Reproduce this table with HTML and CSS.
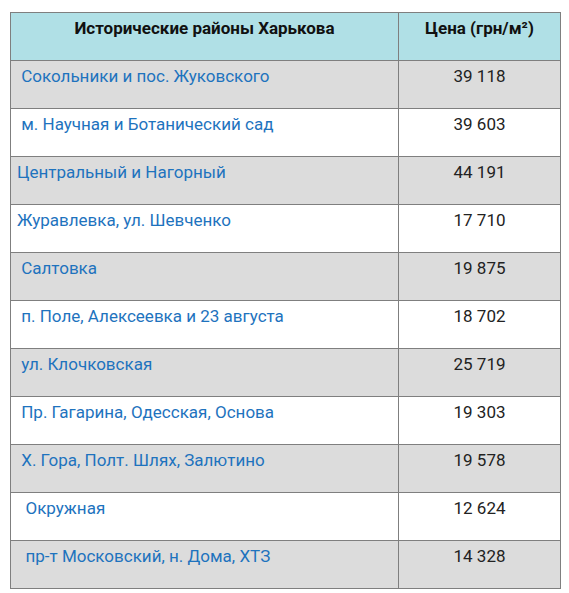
FILE: index.html
```html
<!DOCTYPE html>
<html lang="ru">
<head>
<meta charset="utf-8">
<link rel="stylesheet" href="styles.css">
</head>
<body>
<table class="prices">
  <thead>
    <tr>
      <th class="district">Исторические районы Харькова</th>
      <th class="price">Цена (грн/м²)</th>
    </tr>
  </thead>
  <tbody>
    <tr class="odd"><td class="district">&nbsp;Сокольники и пос. Жуковского</td><td class="price">39 118</td></tr>
    <tr><td class="district">&nbsp;м. Научная и Ботанический сад</td><td class="price">39 603</td></tr>
    <tr class="odd"><td class="district">Центральный и Нагорный</td><td class="price">44 191</td></tr>
    <tr><td class="district">Журавлевка, ул. Шевченко</td><td class="price">17 710</td></tr>
    <tr class="odd"><td class="district">&nbsp;Салтовка</td><td class="price">19 875</td></tr>
    <tr><td class="district">&nbsp;п. Поле, Алексеевка и 23 августа</td><td class="price">18 702</td></tr>
    <tr class="odd"><td class="district">&nbsp;ул. Клочковская</td><td class="price">25 719</td></tr>
    <tr><td class="district">&nbsp;Пр. Гагарина, Одесская, Основа</td><td class="price">19 303</td></tr>
    <tr class="odd"><td class="district">&nbsp;Х. Гора, Полт. Шлях, Залютино</td><td class="price">19 578</td></tr>
    <tr><td class="district">&nbsp;&nbsp;Окружная</td><td class="price">12 624</td></tr>
    <tr class="odd"><td class="district">&nbsp;&nbsp;пр-т Московский, н. Дома, ХТЗ</td><td class="price">14 328</td></tr>
  </tbody>
</table>
</body>
</html>
```
FILE: styles.css
```css
html, body {
  margin: 0;
  padding: 0;
  background: #ffffff;
}
body {
  padding: 12px 0 0 10px;
  font-family: Roboto, "Liberation Sans", sans-serif;
  font-size: 17px;
  line-height: 1.5;
  color: #222222;
}
.prices {
  border-collapse: collapse;
  width: 551px;
  table-layout: fixed;
}
.prices th,
.prices td {
  border: 1px solid #7f7f7f;
  height: 48px;
  box-sizing: border-box;
  padding: 3px 6px;
  vertical-align: top;
}
.prices th {
  background: #b0e0e6;
  font-weight: bold;
  color: #111111;
  text-align: center;
}
.prices th.district { width: 388px; }
.prices td.district {
  color: #1e73be;
  text-align: left;
}
.prices td.price {
  text-align: center;
  color: #222222;
}
.prices tr.odd td {
  background: #dcdcdc;
}
```
